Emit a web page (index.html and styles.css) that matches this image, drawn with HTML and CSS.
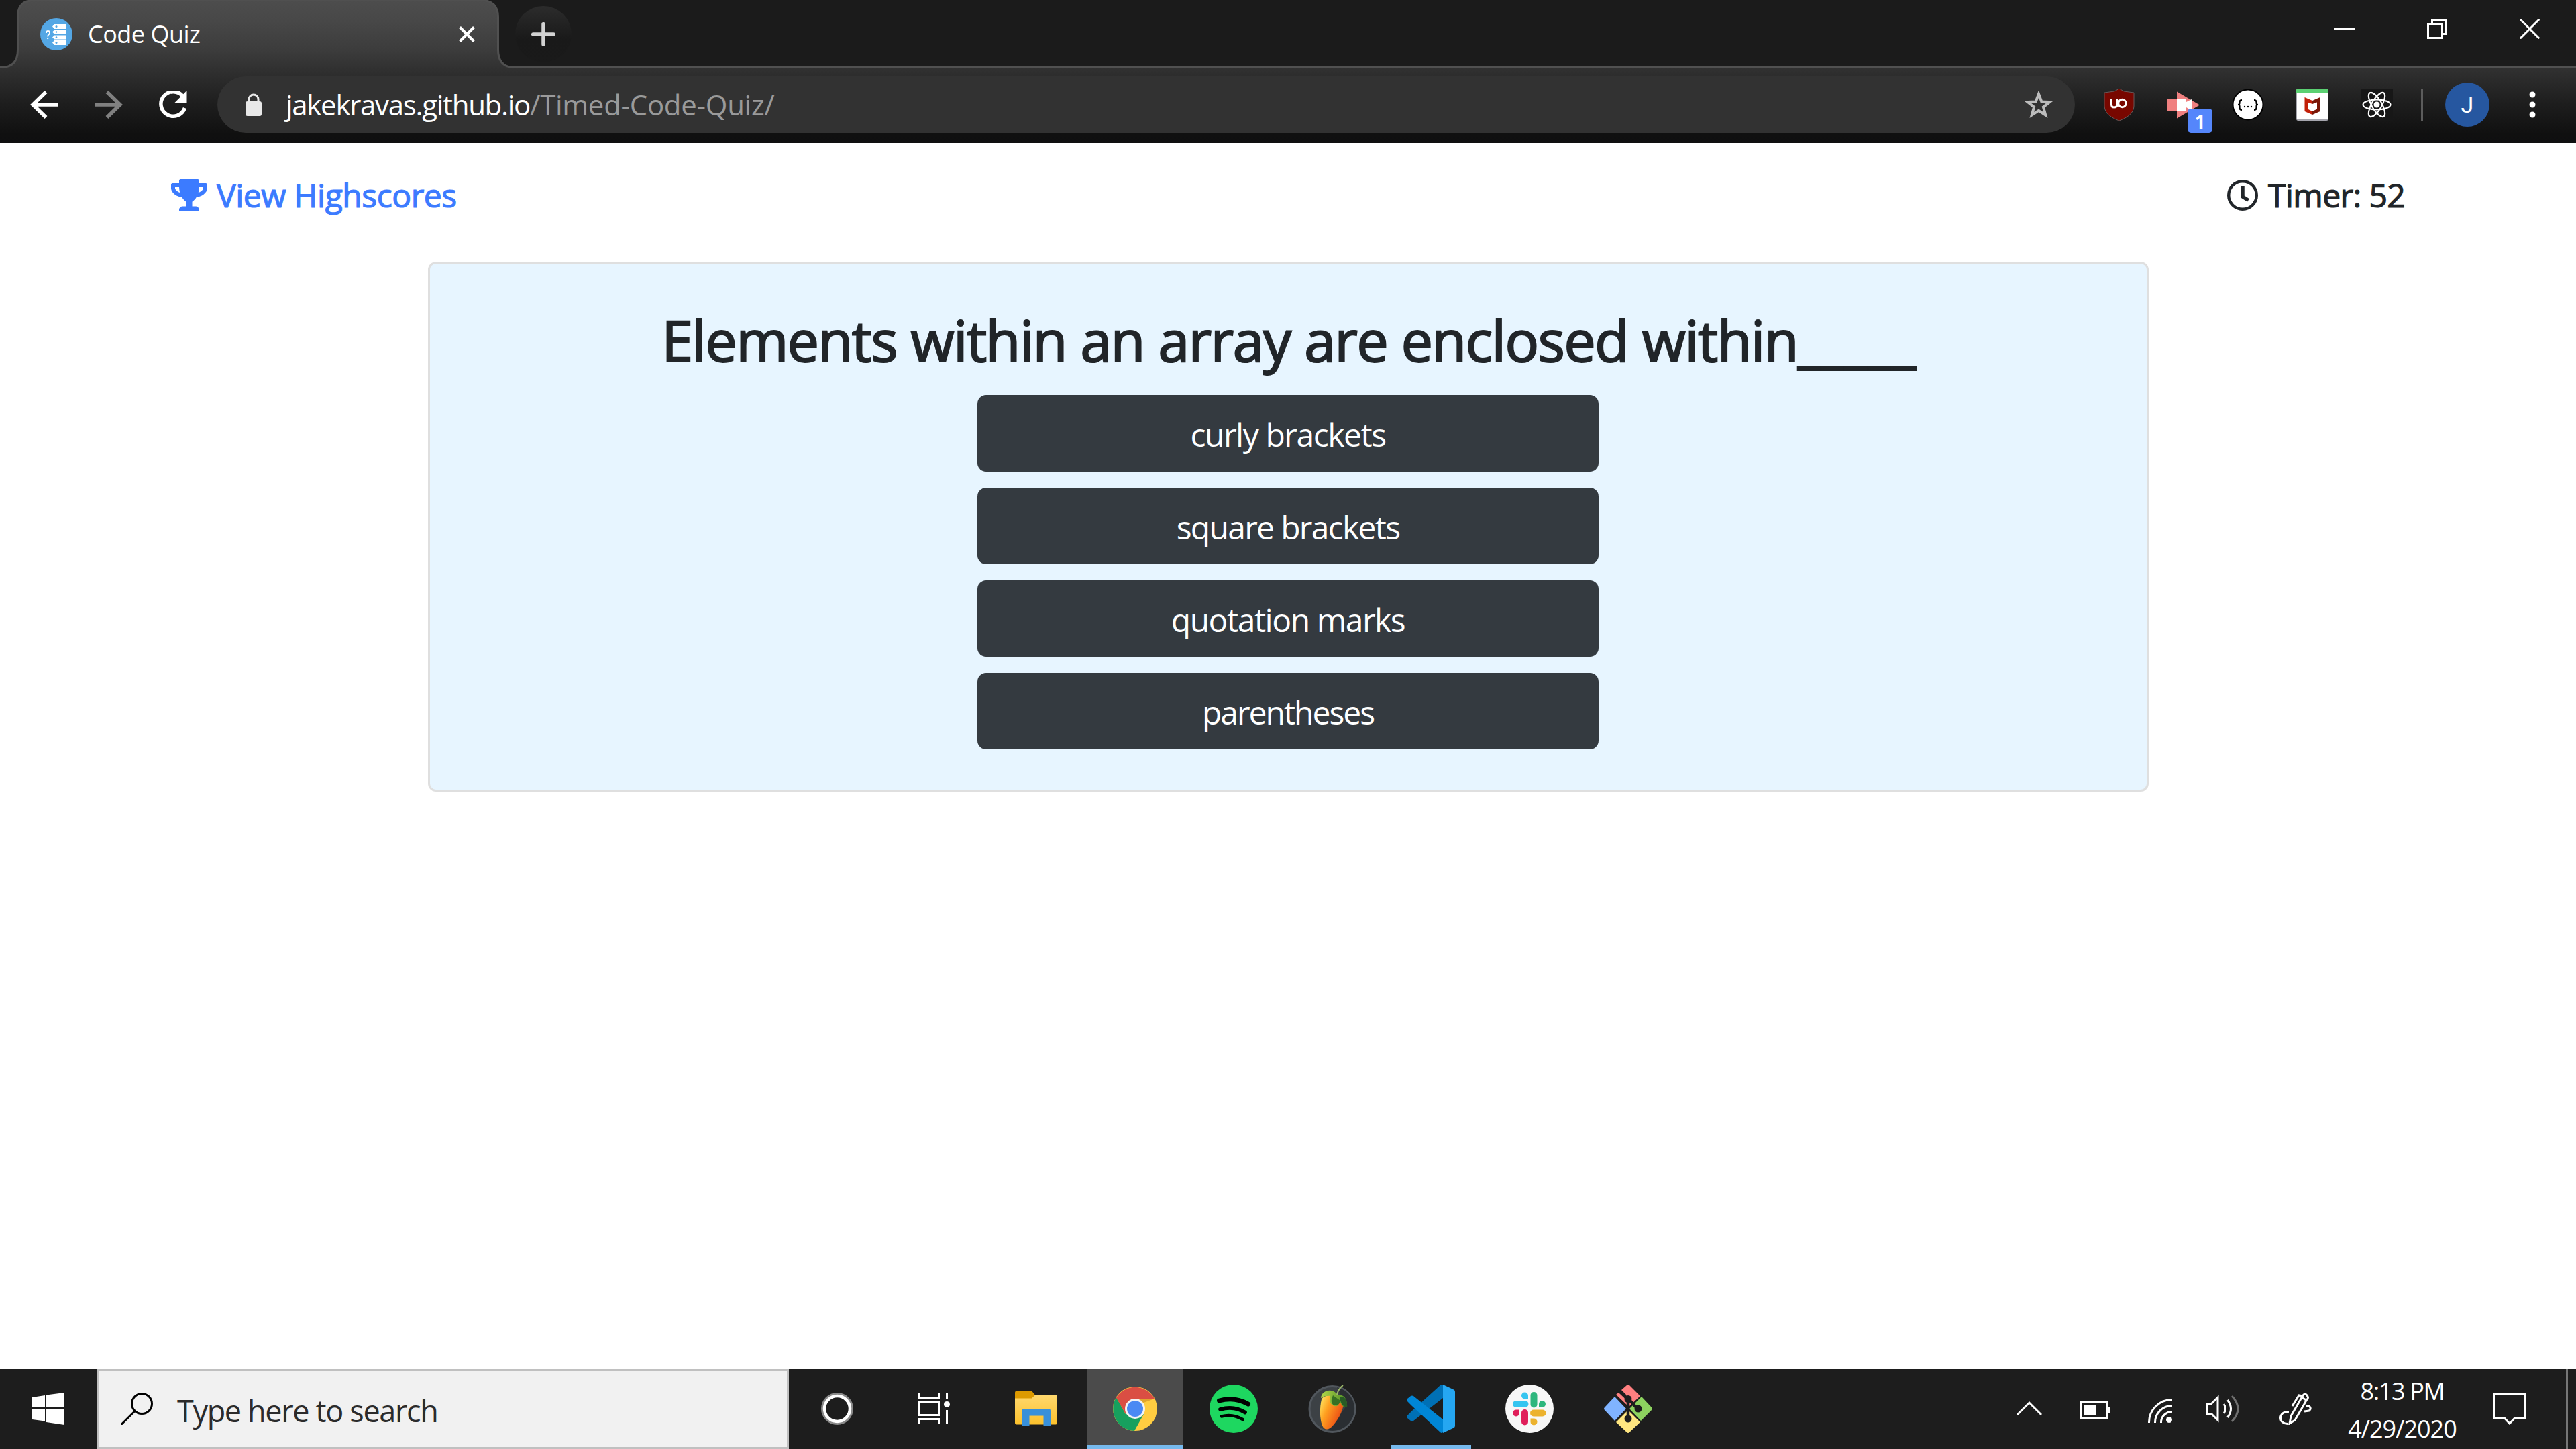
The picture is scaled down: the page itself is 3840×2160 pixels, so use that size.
FILE: index.html
```
<!DOCTYPE html>
<html lang="en">
<head>
<meta charset="utf-8">
<title>Code Quiz</title>
<link rel="stylesheet" href="styles.css">
</head>
<body>
<div class="desktop">

  <header class="browser">
    <svg class="tab-shape" width="3840" height="213" viewBox="0 0 3840 213">
      <defs>
        <linearGradient id="frame" gradientUnits="userSpaceOnUse" x1="0" y1="0" x2="0" y2="213">
          <stop offset="0" stop-color="#4d4d4d"/><stop offset=".14" stop-color="#484848"/><stop offset=".35" stop-color="#3c3c3c"/><stop offset=".49" stop-color="#303030"/><stop offset=".72" stop-color="#1e1e1e"/><stop offset=".94" stop-color="#101010"/><stop offset="1" stop-color="#0f0f10"/>
        </linearGradient>
      </defs>
      <path fill="url(#frame)" stroke="#505050" stroke-width="3" d="M-4 216V100.500H2C18 100.500 26.500 92 26.500 74V25C26.500 9 34 .5 50 .5H718C734 .5 742.500 9 742.500 25V74C742.500 92 751 100.500 767 100.500H3844V216Z"/>
    </svg>
    <div class="tab-strip">
      <div class="tab">
        <svg width="48" height="48" viewBox="0 0 48 48"><circle cx="24" cy="24" r="24" fill="#54a7e5"/><g fill="#fff"><path d="M21 9h17v7H21l-3-3.500zM21 17.500h17v6H21l-3-3zM21 25.500h17v6H21l-3-3zM21 33h17v7H21l-3-3.500z"/></g><g fill="#54a7e5"><circle cx="24" cy="12.500" r="1.500"/><circle cx="24" cy="20.500" r="1.300"/><circle cx="24" cy="28.500" r="1.300"/><circle cx="24" cy="36.500" r="1.500"/></g><path d="M9 22q0-3 2.500-3t2.500 2.500q0 2-1.500 3t-1.300 3" fill="none" stroke="#fff" stroke-width="1.800"/><circle cx="11.200" cy="30" r="1.200" fill="#fff"/></svg>
        <span class="tab-title">Code Quiz</span>
        <svg width="24" height="24" viewBox="0 0 24 24" stroke="#fff" stroke-width="4"><path d="M1.500 1.500l21 21M22.500 1.500l-21 21"/></svg>
      </div>
      <div class="new-tab"><svg width="36" height="36" viewBox="0 0 36 36" stroke="#d2d2d2" stroke-width="5.500" stroke-linecap="round"><path d="M18 2.700v30.600M2.700 18h30.600"/></svg></div>
      <div class="window-controls">
        <svg width="30" height="30" viewBox="0 0 30 30"><path d="M0 14h30v3H0z" fill="#fff"/></svg>
        <svg width="30" height="30" viewBox="0 0 30 30" fill="none" stroke="#fff" stroke-width="3"><path d="M1.500 7.500h21v21h-21zM7.500 7.500v-6h21v21h-6"/></svg>
        <svg width="30" height="30" viewBox="0 0 30 30" stroke="#fff" stroke-width="3"><path d="M.7.700l28.600 28.600M29.300.700L.7 29.300"/></svg>
      </div>
    </div>
    <div class="toolbar">
      <svg class="nav-icon" width="42" height="42" viewBox="0 0 42 42" fill="none" stroke="#fff" stroke-width="5.500"><path d="M42 21H4M23.500 2L4 21l19.500 19"/></svg>
      <svg class="nav-icon" width="42" height="42" viewBox="0 0 42 42" fill="none" stroke="#808080" stroke-width="5.500"><path d="M0 21h38M18.500 2L38 21 18.500 40"/></svg>
      <svg class="nav-icon" width="43" height="42" viewBox="0 0 43 42"><path d="M36.500 8.500A18.300 18.300 0 1 0 39.500 26" fill="none" stroke="#fff" stroke-width="5.500"/><path d="M42.500 0v18.500H24z" fill="#fff"/></svg>
      <div class="omnibox">
        <svg width="24" height="34" viewBox="0 0 24 34"><rect y="12" width="24" height="22" rx="3" fill="#e8e8e8"/><path d="M5 13V9a7 7 0 0 1 14 0v4" fill="none" stroke="#e8e8e8" stroke-width="3"/></svg>
        <div class="url"><span class="host">jakekravas.github.io</span><span class="path">/Timed-Code-Quiz/</span></div>
        <svg class="star" width="44" height="42" viewBox="0 0 44 42"><path d="M22 5l4.300 11.500 12.200.5-9.600 7.500 3.300 12L22 29.800 11.800 36.500l3.300-12L5.500 17l12.200-.5z" fill="none" stroke="#bcbcbc" stroke-width="4"/></svg>
      </div>
      <div class="extensions">
        <svg width="48" height="48" viewBox="0 0 48 48"><path d="M24 0l7 4 15 2v20c0 11-11 18-22 22C13 44 2 37 2 26V6l15-2z" fill="#780700" stroke="#665b5b"/><path d="M12.500 16v8q0 4 4 4t4.500-3.500V16" fill="none" stroke="#fff" stroke-width="3"/><circle cx="28.500" cy="22" r="5.700" fill="none" stroke="#fff" stroke-width="3"/></svg>
        <div class="recorder">
          <svg width="48" height="48" viewBox="0 0 48 48"><path d="M0 15h14v18H0z" fill="#f08080"/><path d="M14 4.500l34 20-34 20z" fill="#f08080"/><path d="M14 15h14v5l8-4v17l-8-5v5H14z" fill="#fff"/></svg>
          <span class="badge">1</span>
        </div>
        <svg width="48" height="48" viewBox="0 0 48 48"><circle cx="24" cy="24" r="22.500" fill="#fff" stroke="#000" stroke-width="2"/><g fill="none" stroke="#000" stroke-width="2.200"><path d="M15 17q-3.500 0-3.500 3v1.500q0 2.500-2.500 2.500 2.500 0 2.500 2.500V29q0 3 3.500 3M33 17q3.500 0 3.500 3v1.500q0 2.500 2.500 2.500-2.500 0-2.500 2.500V29q0 3-3.500 3"/></g><g><circle cx="19" cy="27" r="1.200"/><circle cx="24" cy="27" r="1.200"/><circle cx="29" cy="27" r="1.200"/></g></svg>
        <svg width="48" height="48" viewBox="0 0 48 48"><rect width="48" height="48" rx="3" fill="#a5a5ad"/><path d="M1 6h46v40H1z" fill="#fff"/><path d="M0 7V3q0-3 3-3h42q3 0 3 3v4z" fill="#5bd072"/><path d="M12.500 13L24 18v5l-7-2.500v10l7 3.500v5l-11.500-5z" fill="#c22009"/><path d="M35.500 13L24 18v5l7-2.500v10L24 34v5l11.500-5z" fill="#7b1606"/></svg>
        <svg width="48" height="48" viewBox="0 0 48 48"><rect width="48" height="48" fill="#171717"/><g fill="none" stroke="#fff" stroke-width="2.200"><ellipse cx="24" cy="24" rx="20.500" ry="7.500"/><ellipse cx="24" cy="24" rx="20.500" ry="7.500" transform="rotate(60 24 24)"/><ellipse cx="24" cy="24" rx="20.500" ry="7.500" transform="rotate(120 24 24)"/></g><circle cx="24" cy="24" r="4.500" fill="#fff"/></svg>
      </div>
      <i class="toolbar-divider"></i>
      <div class="avatar">J</div>
      <svg class="menu" width="10" height="40" viewBox="0 0 10 40" fill="#fff"><circle cx="5" cy="5" r="4.500"/><circle cx="5" cy="20" r="4.500"/><circle cx="5" cy="35" r="4.500"/></svg>
    </div>
  </header>

  <main class="page">
    <div class="page-head">
      <a class="highscores"><svg width="54" height="48" viewBox="0 0 576 512"><path fill="currentColor" d="M552 64H448V24c0-13.300-10.700-24-24-24H152c-13.300 0-24 10.700-24 24v40H24C10.700 64 0 74.700 0 88v56c0 35.700 22.500 72.400 61.900 100.700 31.500 22.700 69.800 37.100 110 41.700C203.300 338.500 240 360 240 360v72h-48c-35.300 0-64 20.700-64 56v12c0 6.600 5.400 12 12 12h296c6.600 0 12-5.400 12-12v-12c0-35.300-28.700-56-64-56h-48v-72s36.700-21.500 68.100-73.600c40.300-4.600 78.600-19 110-41.700 39.300-28.300 61.900-65 61.900-100.700V88c0-13.300-10.700-24-24-24zM99.300 192.800C74.900 175.200 64 155.600 64 144v-16h64.200c1 32.600 5.800 61.200 12.800 86.200-15.100-5.200-29.200-12.400-41.700-21.400zM512 144c0 16.100-17.700 36.100-35.300 48.800-12.500 9-26.700 16.200-41.800 21.400 7-25 11.800-53.600 12.800-86.200H512v16z"/></svg><span>View Highscores</span></a>
      <div class="timer"><svg width="46" height="46" viewBox="0 0 46 46" fill="none" stroke="currentColor"><circle cx="23" cy="23" r="20.800" stroke-width="4.400"/><path d="M23 9v16l8.500 5.500" stroke-width="5.500"/></svg><span>Timer: 52</span></div>
    </div>
    <section class="card">
      <h1>Elements within an array are enclosed within<span class="blank">_____</span></h1>
      <div class="choices">
        <button>curly brackets</button>
        <button class="snug">square brackets</button>
        <button>quotation marks</button>
        <button class="tight">parentheses</button>
      </div>
    </section>
  </main>

  <footer class="taskbar">
    <div class="start"><svg width="48" height="48" viewBox="0 0 48 48" fill="#fff"><path d="M0 7l19-3v18H0zM21 3.600L48 0v22H21zM0 24h19v18.500L0 40zM21 24h27v24l-27-4z"/></svg></div>
    <div class="search">
      <svg width="48" height="48" viewBox="0 0 48 48" fill="none" stroke="#000" stroke-width="3"><circle cx="31.500" cy="16.500" r="15"/><path d="M21 27.500L.8 47.500"/></svg>
      <span>Type here to search</span>
    </div>
    <div class="apps">
      <div class="app"><svg width="48" height="48" viewBox="0 0 48 48" fill="none"><circle cx="24" cy="24" r="22.500" stroke="#8a8a8a" stroke-width="3"/><circle cx="24" cy="24" r="19" stroke="#fff" stroke-width="4.500"/></svg></div>
      <div class="app"><svg width="48" height="48" viewBox="0 0 48 48" fill="none" stroke="#fff" stroke-width="3"><path d="M1.500 1v7.500h30V1M1.500 14.500h30v19h-30zM1.500 46v-6.500h30V46M43.500 1v8M43.500 26v20"/><circle cx="43.500" cy="17.500" r="4.500" fill="#fff" stroke="none"/></svg></div>
      <div class="app app-wide"><svg width="72" height="72" viewBox="0 0 72 72"><defs><linearGradient id="fold" x2="0" y2="1"><stop stop-color="#ffd86e"/><stop offset="1" stop-color="#fcc12c"/></linearGradient></defs><path d="M4 12q0-2.500 2.500-2.500H29l5 6v9H4z" fill="#dd9a00"/><path d="M4 20.500h25l5-5h30.500q2.500 0 2.500 2.500V57q0 2.500-2.500 2.500H6.500Q4 59.500 4 57z" fill="url(#fold)"/><path d="M14.500 62V39q0-3 3-3H54q3 0 3 3v23H46.500V46.500h-21V62z" fill="#3890da"/></svg></div>
      <div class="app app-wide active"><svg width="66" height="66" viewBox="0 0 66 66"><circle cx="33" cy="33" r="33" fill="#ffcd41"/><path d="M33 33L19 41 5 16A33 33 0 0 0 32 66l14-25z" fill="#17a05e"/><path d="M5 16.500A33 33 0 0 1 62 18H33L19 41z" fill="#da4e43"/><path d="M33 18h29.500l-17 6z" fill="#e0a52f"/><circle cx="33" cy="33" r="15" fill="#f3f3f3"/><circle cx="33" cy="33" r="12" fill="#4a89f3"/></svg></div>
      <div class="app app-wide"><svg width="72" height="72" viewBox="0 0 72 72"><circle cx="36" cy="36" r="36" fill="#1ed760"/><g fill="none" stroke="#000" stroke-linecap="round"><path d="M14.500 24q23-6.500 43 5" stroke-width="7"/><path d="M16 37q20-6 37 4.500" stroke-width="5.700"/><path d="M18 47.500q16-4.500 31.500 4.500" stroke-width="4.600"/></g></svg></div>
      <div class="app app-wide"><svg width="72" height="72" viewBox="0 0 72 72"><defs><linearGradient id="fruit" x1="0" y1="0" x2="1" y2=".6"><stop stop-color="#fff06a"/><stop offset=".4" stop-color="#ffa020"/><stop offset=".8" stop-color="#f06018"/><stop offset="1" stop-color="#d8480c"/></linearGradient><linearGradient id="leaf"><stop stop-color="#b4d94a"/><stop offset="1" stop-color="#4a8a24"/></linearGradient></defs><circle cx="36" cy="36.500" r="34" fill="#3c4145" stroke="#51575d" stroke-width="3"/><path d="M43 4a32 32 0 0 1-13 64l27-36z" fill="#2a2e32"/><path d="M20 22c-3 13-3 28 1 39 3 7 9 7 14 2 9-9 16-22 18-34 0-14-28-17-33-7z" fill="url(#fruit)"/><path d="M19 20c1-11 15-15 23-7l4 3c9-2 13 9 12 18-6 0-8-3-11-9-1 7-6 9-10 6-5-3-6-8-4-14-5-1-9 0-14 3z" fill="url(#leaf)"/><path d="M37 16q-5 10 1 15 9 1 10-7z" fill="#387024"/><path d="M48 18c7-1 11 6 10 16-6-1-8-5-10-10z" fill="#285b25"/><path d="M43 15Q45 6 52 1" fill="none" stroke="#9cb86a" stroke-width="2"/></svg></div>
      <div class="app app-wide running"><svg width="72" height="72" viewBox="0 0 72 72"><path d="M1 46l7-7L50 1q2-1 4 0v19L10 54q-2 2-4 0l-5-4q-2-2 0-4z" fill="#0070b5"/><path d="M1 25q-2-2 0-4l5-4q2-1 4 0l44 35v19q-2 2-4 0L8 32z" fill="#0086d6"/><path d="M54 0l16 7.500q2 1 2 3v51q0 2-2 3L54 72z" fill="#25a7f2"/></svg></div>
      <div class="app app-wide"><svg width="72" height="72" viewBox="0 0 72 72"><circle cx="36" cy="36" r="36" fill="#f7f7f7"/><path d="M34 21.500H29a5 5 0 1 1 5-5zM16 24h13.500a5 5 0 0 1 0 10H16a5 5 0 0 1 0-10z" fill="#36c5f0"/><path d="M50 34v-5a5 5 0 1 1 5 5zM47.500 16v13.500a5 5 0 0 1-10 0V16a5 5 0 0 1 10 0z" fill="#2eb67d"/><path d="M37.500 50.500h5a5 5 0 1 1-5 5zM55.500 47.500H42a5 5 0 0 1 0-10h13.500a5 5 0 0 1 0 10z" fill="#ecb22e"/><path d="M21 37.500v5a5 5 0 1 1-5-5zM24 55.500V42a5 5 0 0 1 10 0v13.500a5 5 0 0 1-10 0z" fill="#e01e5a"/></svg></div>
      <div class="app app-wide"><svg width="72" height="72" viewBox="0 0 72 72"><path d="M34 1q2-2 4 0l16 16-17 16L18 15l5-4 7 7 4-2-8-8z" fill="#ff7f80"/><path d="M16 18l17 18-17 18L1 38q-2-2 0-4z" fill="#80b3ff"/><path d="M56 18l15 16q2 2 0 4L55 54 38 36z" fill="#8dd35f"/><path d="M36 38l18 18-16 15q-2 2-4 0L18 56z" fill="#ffe680"/><g fill="none" stroke="#1d1d1d"><path d="M21 8l15 14v28M38 23l12 13" stroke-width="4.500"/></g><g fill="#1d1d1d"><circle cx="36" cy="21.500" r="5.500"/><circle cx="51" cy="36" r="5.500"/><circle cx="36" cy="51" r="5.500"/></g></svg></div>
    </div>
    <div class="tray">
      <svg class="chevron" width="38" height="48" viewBox="0 0 38 48" fill="none" stroke="#fff" stroke-width="3"><path d="M1 33L19 15l18 18"/></svg>
      <svg class="battery" width="46" height="48" viewBox="0 0 46 48"><path d="M1.500 13.500h40v24h-40z" fill="none" stroke="#fff" stroke-width="3"/><path d="M6 18h18v15H6zM42 21h4v9h-4z" fill="#fff"/></svg>
      <svg class="wifi" width="36" height="48" viewBox="0 0 36 48" fill="none" stroke="#fff" stroke-width="3"><path d="M1.500 45A34 34 0 0 1 36 10.500M10.500 45A25 25 0 0 1 36 19.500M19.500 45A16 16 0 0 1 36 28.500"/><circle cx="31.500" cy="40.500" r="4.500" fill="#fff" stroke="none"/></svg>
      <svg class="volume" width="50" height="48" viewBox="0 0 50 48" fill="none" stroke="#fff" stroke-width="3"><path d="M1.500 16.500h6L17 7v34l-9.500-9.500h-6zM26 17q5 7 0 14M31.500 11q10 13 0 26"/><path d="M38 5q18 19 0 38" stroke="#707070"/></svg>
      <svg class="pen" width="48" height="48" viewBox="0 0 48 48" fill="none" stroke="#fff" stroke-width="3"><path d="M15 46l2-11L35 4q3-4 6 0t0 6L23 41zM35 5l-6-1-10 16M33 7l8 5M14 28.500C5 28 1.500 33 1.500 38S6 46.500 12 46.500M40 20c6-1 8 4 4 7l-7 1"/></svg>
      <div class="clock"><span class="time">8:13 PM</span><span class="date">4/29/2020</span></div>
      <svg class="notify" width="48" height="48" viewBox="0 0 48 48" fill="none" stroke="#fff" stroke-width="3"><path d="M1.500 1.500h45v36H32l-8 8.500-8-8.500H1.500z"/></svg>
      <i class="peek"></i>
    </div>
  </footer>
</div>
</body>
</html>
```
FILE: styles.css
```
* { box-sizing: border-box; }

body {
  margin: 0;
  font-family: "Open Sans", "Noto Sans", sans-serif;
  background: #fff;
}

svg { display: block; flex: none; }

.desktop {
  width: 3840px;
  height: 2160px;
  display: flex;
  flex-direction: column;
  overflow: hidden;
}

/* Browser frame */
.browser {
  position: relative;
  height: 213px;
  flex: none;
  background: #1b1b1b;
  color: #fff;
}
.tab-shape { position: absolute; inset: 0; }
.tab-strip, .toolbar { position: relative; display: flex; align-items: center; }
.tab-strip { height: 102px; padding-left: 60px; }
.tab { display: flex; align-items: center; width: 648px; }
.tab-title {
  flex: 1;
  margin: -2px 0 0 23px;
  font-size: 36px;
  letter-spacing: -.5px;
}
.new-tab {
  width: 84px;
  height: 84px;
  margin-left: 60px;
  border-radius: 50%;
  background: linear-gradient(#2c2c2c, #191919 60%, #1a1a1a);
  display: flex;
  align-items: center;
  justify-content: center;
}
.window-controls {
  margin: -16px 54px 0 auto;
  display: flex;
  gap: 108px;
}

.toolbar { height: 108px; padding-left: 45px; }
.nav-icon { margin-right: 54px; }
.nav-icon + .nav-icon + .nav-icon { margin-right: 45px; margin-left: -1px; }
.omnibox {
  width: 2769px;
  height: 84px;
  border-radius: 42px;
  background: #323232;
  padding: 0 32px 0 42px;
  display: flex;
  align-items: center;
}
.url {
  flex: 1;
  margin: -1px 0 0 36px;
  font-size: 42px;
  white-space: nowrap;
}
.host { letter-spacing: -1.3px; }
.path { color: #9a9a9a; letter-spacing: -.3px; }
.extensions { display: flex; gap: 48px; margin-left: 42px; }
.recorder { position: relative; }
.badge {
  position: absolute;
  left: 30px;
  top: 30px;
  width: 37px;
  height: 36px;
  border-radius: 5px;
  background: #5586fb;
  font: 700 28px/38px "Open Sans", sans-serif;
  text-align: center;
}
.toolbar-divider { width: 3px; height: 48px; margin-left: 42px; background: #5c5c5c; }
.avatar {
  width: 66px;
  height: 66px;
  margin-left: 33px;
  border-radius: 50%;
  background: #2657a0;
  font: 34px/67px Roboto, sans-serif;
  text-align: center;
}
.menu { margin-left: 59px; }

/* Quiz page */
.page { flex: 1; color: #212529; }
.page-head {
  height: 177px;
  padding: 48px 258px 0 255px;
  display: flex;
  justify-content: space-between;
  font-size: 48px;
  line-height: 62px;
  -webkit-text-stroke: 1.200px currentColor;
}
.highscores, .timer { display: flex; align-items: center; height: 60px; white-space: nowrap; }
.highscores { color: #3c7bff; gap: 14px; letter-spacing: -.45px; }
.timer { gap: 15px; letter-spacing: -.6px; width: 262px; }
.card {
  width: 2565px;
  height: 790px;
  margin-left: 638px;
  padding-top: 63px;
  border: 3px solid #dfdfdf;
  border-radius: 12px;
  background: #e7f5ff;
  display: flex;
  flex-direction: column;
  align-items: center;
}
.card h1 {
  margin: 0 0 32px;
  font-size: 84px;
  line-height: 101px;
  font-weight: 400;
  -webkit-text-stroke: 2.200px currentColor;
  letter-spacing: -1.350px;
  white-space: nowrap;
}
.card .blank { letter-spacing: -1.900px; }
.choices { width: 926px; margin-right: 1px; display: flex; flex-direction: column; gap: 24px; }
.choices button {
  height: 114px;
  padding: 2px 0 0 0;
  border: 0;
  border-radius: 13px;
  background: #343a40;
  color: #fff;
  font: 48px "Open Sans", "Noto Sans", sans-serif;
  letter-spacing: -1.450px;
}
.choices .snug { letter-spacing: -1.700px; }
.choices .tight { letter-spacing: -2px; }

/* Taskbar */
.taskbar {
  height: 120px;
  flex: none;
  background: #1d1d1d;
  color: #fff;
  display: flex;
}
.start { width: 144px; display: flex; align-items: center; padding-left: 48px; }
.search {
  width: 1032px;
  border: 3px solid #c0c0c0;
  background: #f1f1f1;
  color: #2b2b2b;
  padding-left: 33px;
  display: flex;
  align-items: center;
  font-size: 45px;
}
.search span { margin: 5px 0 0 36px; letter-spacing: -1.350px; }
.apps { display: flex; }
.app { width: 144px; display: flex; align-items: center; justify-content: center; }
.app-wide { margin-right: 3px; }
.app-wide:nth-child(3) { margin-left: 9px; }
.active { background: #4b4b4b; box-shadow: inset 0 -6px #76b9ed; }
.running { background: linear-gradient(#76b9ed, #76b9ed) center bottom / 120px 6px no-repeat; }
.tray { flex: 1; display: flex; align-items: center; justify-content: flex-end; }
.battery { margin-left: 56px; }
.wifi { margin-left: 56px; }
.volume { margin-left: 51px; }
.pen { margin-left: 59px; }
.clock {
  width: 162px;
  margin: 4px 0 0 54px;
  display: flex;
  flex-direction: column;
  align-items: center;
  font-size: 36px;
  line-height: 56px;
  white-space: nowrap;
}
.time { letter-spacing: -1.400px; }
.date { letter-spacing: -1px; }
.notify { margin-left: 55px; }
.peek { width: 3px; height: 120px; margin: 0 12px 0 60px; background: #777; }
```
